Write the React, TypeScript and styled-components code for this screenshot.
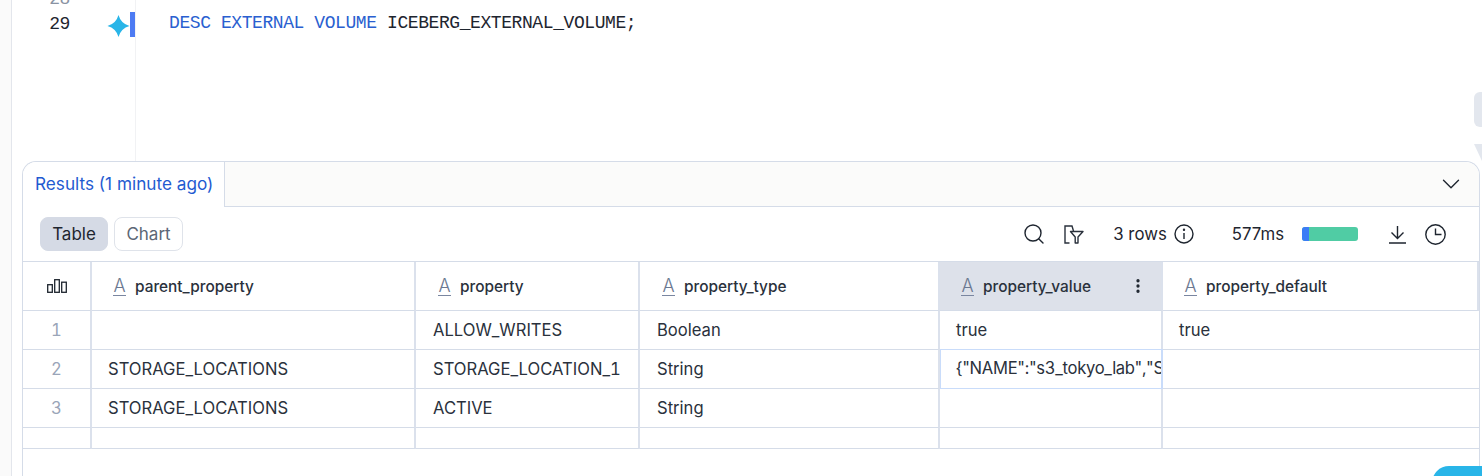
import React from "react";
import styled, { createGlobalStyle } from "styled-components";
import { Search, ChevronDown, EllipsisVertical } from "lucide-react";

const GlobalStyle = createGlobalStyle`
  html, body {
    margin: 0;
    padding: 0;
    background: #fff;
    overflow: hidden;
  }
  * {
    box-sizing: border-box;
  }
`;

const LINE_COLOR = "#d5dce8";
const COLUMN_LINE = "#dbe1ec";
const INK = "#1e252f";

const Page = styled.div`
  position: relative;
  display: flex;
  width: 1482px;
  height: 476px;
  overflow: hidden;
  font-family: Inter, "Liberation Sans", sans-serif;
  color: ${INK};
`;

const Rail = styled.div`
  flex: 0 0 12px;
  background: #fafafa;
  border-right: 1px solid #e3e6ec;
`;

const Main = styled.div`
  flex: 1;
  display: flex;
  flex-direction: column;
  min-width: 0;
`;

const Editor = styled.div`
  flex: 0 0 161px;
  display: flex;
  overflow: hidden;
  font-family: "Liberation Mono", monospace;
  font-size: 18px;
  letter-spacing: -0.42px;
  line-height: 25px;
`;

const Gutter = styled.div`
  flex: 0 0 124px;
  margin-top: -13px;
  border-right: 1px solid #f1f2f4;
`;

const GutterLine = styled.div`
  display: flex;
  align-items: center;
  height: 25px;
`;

const LineNumber = styled.span<{ $current?: boolean }>`
  flex: 0 0 58px;
  text-align: right;
  color: ${(p) => (p.$current ? INK : "#8a93a3")};
`;

const Spark = styled.svg`
  flex: 0 0 23px;
  margin-left: 37px;
  margin-top: 3px;
`;

const ChangeBar = styled.span`
  flex: 0 0 5px;
  height: 25px;
  background: #4d7bf3;
`;

const Code = styled.div`
  padding: 11px 0 0 33px;
  white-space: pre;
`;

const Keyword = styled.span`
  color: #2a5fd0;
`;

const Panel = styled.section`
  flex: 1;
  display: flex;
  flex-direction: column;
  margin: 0 2px 0 10px;
  background: #fff;
  border: 1px solid ${LINE_COLOR};
  border-bottom: 0;
  border-radius: 14px 14px 0 0;
`;

const TabBar = styled.div`
  flex: 0 0 45px;
  display: flex;
  align-items: center;
  justify-content: space-between;
  background: #fbfbfa;
  border-bottom: 1px solid ${LINE_COLOR};
  border-radius: 14px 14px 0 0;
  padding-right: 13px;
`;

const ActiveTab = styled.div`
  align-self: stretch;
  display: flex;
  align-items: center;
  width: 202px;
  margin-bottom: -1px;
  padding: 0 0 3px 12px;
  background: #fff;
  border-right: 1px solid ${LINE_COLOR};
  border-radius: 14px 0 0 0;
  color: #1f5bd1;
  font-size: 17.2px;
  white-space: nowrap;
`;

const Toolbar = styled.div`
  flex: 0 0 55px;
  display: flex;
  align-items: center;
  justify-content: space-between;
  padding: 0 33px 0 17px;
  border-bottom: 1px solid ${LINE_COLOR};
`;

const ViewSwitch = styled.div`
  display: flex;
  gap: 6px;
`;

const ViewButton = styled.button<{ $active?: boolean }>`
  width: ${(p) => (p.$active ? "68px" : "69px")};
  height: 34px;
  border: 1px solid ${(p) => (p.$active ? "#d5dae5" : "#dfe3ea")};
  border-radius: 8px;
  background: ${(p) => (p.$active ? "#d5dae5" : "#fff")};
  color: ${(p) => (p.$active ? INK : "#5c6675")};
  font: 400 17px Inter, sans-serif;
  padding: 0;
`;

const Stats = styled.div`
  display: flex;
  align-items: center;
`;

const Stat = styled.span<{ $gap: number }>`
  display: inline-flex;
  margin-left: ${(p) => p.$gap}px;
  font-size: 16.8px;
  line-height: 20px;
  white-space: nowrap;
`;

const TimingBar = styled.div`
  display: flex;
  width: 56px;
  height: 14px;
  margin-left: 18px;
  border-radius: 3px;
  overflow: hidden;
  background: #50cca4;
`;

const TimingSegment = styled.div`
  width: 7px;
  background: #3b7cf6;
`;

const Grid = styled.div`
  display: grid;
  grid-template-columns: 69px 324px 224px 300px 223px 1fr;
`;

const HeaderCell = styled.div<{ $active?: boolean }>`
  display: flex;
  align-items: center;
  height: 49px;
  padding: 0 14px 0 22px;
  background: ${(p) => (p.$active ? "#dde1ea" : "#fff")};
  border-right: 2px solid ${COLUMN_LINE};
  border-bottom: 1px solid ${LINE_COLOR};
  font-size: 15.4px;
  font-weight: 450;
  color: #2a313c;

  &:nth-child(2),
  &:nth-child(5),
  &:nth-child(6) {
    padding-left: 21px;
  }

  &:last-child {
    border-right: 0;
  }
`;

const IndexHeader = styled(HeaderCell)`
  justify-content: center;
  padding: 0;
`;

const TypeMark = styled.span`
  display: inline-block;
  width: 13px;
  margin-right: 9px;
  border-bottom: 1.5px solid #7a86a0;
  color: #6b7891;
  font-size: 18px;
  font-weight: 300;
  line-height: 18px;
  text-align: center;
`;

const ColumnName = styled.span`
  flex: 1;
`;

const Cell = styled.div<{ $selected?: boolean; $short?: boolean }>`
  height: ${(p) => (p.$short ? "21px" : "39px")};
  padding: 0 0 0 17px;
  border-right: 2px solid ${COLUMN_LINE};
  border-bottom: 1px solid ${LINE_COLOR};
  font-size: 16.6px;
  font-variant-numeric: tabular-nums;
  line-height: 38px;
  white-space: nowrap;
  overflow: hidden;
  color: #2a313c;

  &:nth-child(6n + 2),
  &:nth-child(6n + 5),
  &:nth-child(6n) {
    padding-left: 16px;
  }

  &:nth-child(6n) {
    border-right: 0;
  }

  ${(p) =>
    p.$selected &&
    `
    && {
      border: 1px solid #c9dcfa;
      border-right-width: 2px;
      line-height: 37px;
      letter-spacing: -0.3px;
      padding-left: 15px;
      margin-top: -1px;
      height: 40px;
    }
  `}
`;

const IndexCell = styled(Cell)`
  padding: 0;
  text-align: center;
  color: #9aa5b8;
`;

const ScrollThumb = styled.div`
  position: absolute;
  right: 0;
  top: 92px;
  width: 8px;
  height: 35px;
  border-radius: 6px 0 0 6px;
  background: #e3e7ee;
`;

const ScrollArrow = styled.div`
  position: absolute;
  right: 0;
  top: 144px;
  width: 8px;
  height: 17px;
  background: #e3e7ee;
  clip-path: polygon(0 0, 100% 0, 100% 100%);
`;

const AskButton = styled.div`
  position: absolute;
  right: -20px;
  bottom: -24px;
  width: 70px;
  height: 34px;
  border-radius: 17px;
  background: #29b5e8;
`;

const FilterIcon = () => (
  <svg width="20" height="19" viewBox="0 0 20 19" fill="none" stroke="#2a313c" strokeWidth="1.4">
    <path d="M5.5 18H1V1h7l1.5 5" />
    <path d="M6.5 6.5h12.5l-5 5.5v6h-2.8v-6z" strokeLinejoin="round" />
  </svg>
);

const InfoIcon = () => (
  <svg width="20" height="20" viewBox="0 0 20 20" fill="none" stroke={INK} strokeWidth="1.4">
    <circle cx="10" cy="10" r="9" />
    <path d="M10 9v6" />
    <circle cx="10" cy="5.8" r="0.5" fill={INK} />
  </svg>
);

const DownloadIcon = () => (
  <svg width="17" height="19" viewBox="0 0 17 19" fill="none" stroke={INK} strokeWidth="1.4">
    <path d="M8.5 1v12M2.5 7.5l6 6 6-6M0 18h17" />
  </svg>
);

const ClockIcon = () => (
  <svg width="21" height="21" viewBox="0 0 21 21" fill="none" stroke={INK} strokeWidth="1.4">
    <circle cx="10.5" cy="10.5" r="9.7" />
    <path d="M10.5 4.5v6h6" />
  </svg>
);

const BarsIcon = () => (
  <svg width="20" height="14" viewBox="0 0 20 14" fill="none" stroke={INK} strokeWidth="1.3">
    <rect x="0.7" y="5.7" width="4.6" height="7.6" />
    <rect x="7.7" y="0.7" width="4.6" height="12.6" />
    <rect x="14.7" y="3.2" width="4.6" height="10.1" />
  </svg>
);

const columns = ["parent_property", "property", "property_type", "property_value", "property_default"];

const rows = [
  ["", "ALLOW_WRITES", "Boolean", "true", "true"],
  ["STORAGE_LOCATIONS", "STORAGE_LOCATION_1", "String", '{"NAME":"s3_tokyo_lab","STORAGE_PROVIDER":"S3"}', ""],
  ["STORAGE_LOCATIONS", "ACTIVE", "String", "", ""],
];

const App = () => {
  return (
    <Page>
      <GlobalStyle />
      <Rail />
      <Main>
        <Editor>
          <Gutter>
            <GutterLine>
              <LineNumber>28</LineNumber>
            </GutterLine>
            <GutterLine>
              <LineNumber $current>29</LineNumber>
              <Spark width="23" height="24" viewBox="0 0 24 24">
                <path d="M12 0.5Q14.5 9.5 23.5 12 14.5 14.5 12 23.5 9.5 14.5 0.5 12 9.5 9.5 12 0.5z" fill="#29b5e8" />
              </Spark>
              <ChangeBar />
            </GutterLine>
          </Gutter>
          <Code>
            <Keyword>DESC EXTERNAL VOLUME</Keyword> ICEBERG_EXTERNAL_VOLUME;
          </Code>
        </Editor>
        <Panel>
          <TabBar>
            <ActiveTab>Results (1 minute ago)</ActiveTab>
            <ChevronDown size={30} strokeWidth={1.1} color={INK} />
          </TabBar>
          <Toolbar>
            <ViewSwitch>
              <ViewButton $active>Table</ViewButton>
              <ViewButton>Chart</ViewButton>
            </ViewSwitch>
            <Stats>
              <Search size={24} strokeWidth={1.4} color={INK} />
              <Stat $gap={18}><FilterIcon /></Stat>
              <Stat $gap={29}>3 rows</Stat>
              <Stat $gap={7}><InfoIcon /></Stat>
              <Stat $gap={38}>577ms</Stat>
              <TimingBar><TimingSegment /></TimingBar>
              <Stat $gap={31}><DownloadIcon /></Stat>
              <Stat $gap={19}><ClockIcon /></Stat>
            </Stats>
          </Toolbar>
          <Grid>
            <IndexHeader><BarsIcon /></IndexHeader>
            {columns.map((name) => (
              <HeaderCell key={name} $active={name === "property_value"}>
                <TypeMark>A</TypeMark>
                <ColumnName>{name}</ColumnName>
                {name === "property_value" && <EllipsisVertical size={18} strokeWidth={2.4} color={INK} />}
              </HeaderCell>
            ))}
            {rows.map((row, r) => (
              <React.Fragment key={r}>
                <IndexCell>{r + 1}</IndexCell>
                {row.map((value, c) => (
                  <Cell key={c} $selected={r === 1 && c === 3}>{value}</Cell>
                ))}
              </React.Fragment>
            ))}
            {Array.from({ length: 6 }).map((_, i) => (
              <Cell key={i} $short />
            ))}
          </Grid>
        </Panel>
      </Main>
      <ScrollThumb />
      <ScrollArrow />
      <AskButton />
    </Page>
  );
};

export default App;
